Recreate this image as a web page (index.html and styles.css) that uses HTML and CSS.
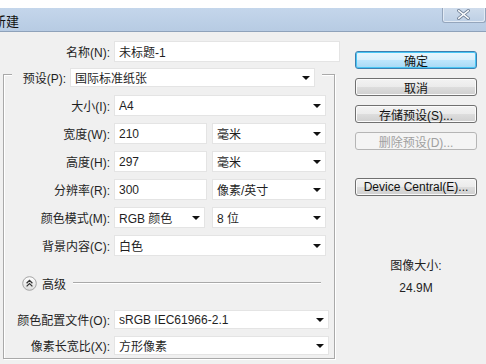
FILE: index.html
```html
<!DOCTYPE html>
<html lang="zh-CN">
<head>
    <meta charset="UTF-8">
    <title>新建</title>
    <link rel="stylesheet" href="styles.css">
</head>
<body>
    <div class="topgap"></div>
    <div class="titlebar">
        <span class="title">新建</span>
        <span class="close">
            <svg width="44" height="15" viewBox="0 0 44 15">
                <path d="M17 3.5 L27 11.5 M27 3.5 L17 11.5" stroke="#6f7f95" stroke-width="3.2" stroke-linecap="round"/>
                <path d="M17 3.5 L27 11.5 M27 3.5 L17 11.5" stroke="#fbfcfd" stroke-width="1.4" stroke-linecap="round"/>
            </svg>
        </span>
    </div>
    <div class="dialog">
        <!--左側表單-->
        <div class="main">
            <div class="row">
                <label class="lbl">名称(N):</label>
                <div class="field f-name">未标题-1</div>
            </div>
            <div class="group">
                <div class="legend">
                    <label class="lbl-legend">预设(P):</label>
                    <div class="field f-preset">国际标准纸张<i class="arrow"></i></div>
                </div>
                <div class="row first">
                    <label class="lbl">大小(I):</label>
                    <div class="field f-full">A4<i class="arrow"></i></div>
                </div>
                <div class="row">
                    <label class="lbl">宽度(W):</label>
                    <div class="field f-num">210</div>
                    <div class="field f-unit">毫米<i class="arrow"></i></div>
                </div>
                <div class="row">
                    <label class="lbl">高度(H):</label>
                    <div class="field f-num">297</div>
                    <div class="field f-unit">毫米<i class="arrow"></i></div>
                </div>
                <div class="row">
                    <label class="lbl">分辨率(R):</label>
                    <div class="field f-num">300</div>
                    <div class="field f-unit">像素/英寸<i class="arrow"></i></div>
                </div>
                <div class="row">
                    <label class="lbl">颜色模式(M):</label>
                    <div class="field f-mode">RGB 颜色<i class="arrow"></i></div>
                    <div class="field f-bits">8 位<i class="arrow"></i></div>
                </div>
                <div class="row">
                    <label class="lbl">背景内容(C):</label>
                    <div class="field f-full">白色<i class="arrow"></i></div>
                </div>
                <!--高級-->
                <div class="advanced">
                    <svg class="adv-icon" width="15" height="15" viewBox="0 0 15 15">
                        <defs>
                            <linearGradient id="g" x1="0" y1="0" x2="0" y2="1">
                                <stop offset="0" stop-color="#ffffff"/>
                                <stop offset="1" stop-color="#dcdcdc"/>
                            </linearGradient>
                        </defs>
                        <circle cx="7.5" cy="7.5" r="6.8" fill="url(#g)" stroke="#a3a3a3"/>
                        <path d="M4.6 7.2 L7.5 4.4 L10.4 7.2 M4.6 10.4 L7.5 7.6 L10.4 10.4" fill="none" stroke="#333" stroke-width="1.3"/>
                    </svg>
                    <span class="adv-text">高级</span>
                    <span class="adv-line"></span>
                </div>
                <div class="row small gap-big">
                    <label class="lbl">颜色配置文件(O):</label>
                    <div class="field f-long">sRGB IEC61966-2.1<i class="arrow"></i></div>
                </div>
                <div class="row small">
                    <label class="lbl">像素长宽比(X):</label>
                    <div class="field f-long">方形像素<i class="arrow"></i></div>
                </div>
            </div>
        </div>
        <!--右側按鈕-->
        <div class="side">
            <div class="btn btn-ok">确定</div>
            <div class="btn">取消</div>
            <div class="btn">存储预设(S)...</div>
            <div class="btn disabled">删除预设(D)...</div>
            <div class="btn btn-device">Device Central(E)...</div>
            <div class="info">图像大小:</div>
            <div class="info size">24.9M</div>
        </div>
    </div>
</body>
</html>
```

FILE: styles.css
```css
*{
    margin: 0;
    padding: 0;
    box-sizing: border-box;
}
body{
    width: 486px;
    height: 364px;
    overflow: hidden;
    background: #f0f0f0;
    font-family: "Liberation Sans", "Noto Sans CJK SC", sans-serif;
    font-size: 12px;
    color: #1f1f1f;
}
.topgap{
    height: 8px;
    background: #fff;
}
.titlebar{
    height: 24px;
    background: linear-gradient(#c4d6eb, #b7cbe3);
    border-bottom: 1px solid #8fa2ba;
    display: flex;
    justify-content: space-between;
    align-items: flex-start;
}
.title{
    margin-left: -7px;
    margin-top: 3px;
    font-size: 13px;
    color: #111;
}
.close{
    width: 44px;
    height: 15px;
    border: 1px solid #94a5bc;
    border-top: 0;
    border-radius: 0 0 3px 3px;
    background: linear-gradient(#cfdcec, #bdcfe5);
    box-shadow: inset 1px 0 #e2eaf4, inset -1px -1px #e2eaf4;
    display: flex;
}
.close svg{
    margin: -1px 0 0 -1px;
}
.dialog{
    display: flex;
    padding-top: 9px;
}
.main{
    width: 341px;
}
.row{
    display: flex;
    align-items: center;
    height: 21px;
}
.lbl{
    width: 114px;
    text-align: right;
    padding-right: 4px;
    white-space: nowrap;
}
.field{
    height: 21px;
    background: #fff;
    border: 1px solid #e4e4e4;
    padding-left: 4px;
    display: flex;
    align-items: center;
    white-space: nowrap;
}
.arrow{
    margin-left: auto;
    margin-right: 4px;
    border-left: 4px solid transparent;
    border-right: 4px solid transparent;
    border-top: 4px solid #111;
}
.f-name{
    width: 226px;
}
.group{
    margin: 12px 0 0 3px;
    width: 332px;
    height: 285px;
    border: 1px solid #a9a9a9;
    box-shadow: inset 1px 1px #fff, 1px 1px #fff;
}
.group .lbl{
    width: 110px;
}
.legend{
    display: flex;
    align-items: center;
    width: max-content;
    margin: -7px 0 0 8px;
    padding-right: 7px;
    background: #f0f0f0;
}
.lbl-legend{
    width: 58px;
    text-align: right;
    padding-right: 4px;
}
.f-preset{
    width: 245px;
    height: 19px;
}
.group .row{
    margin-top: 7px;
}
.group .row.first{
    margin-top: 8px;
}
.f-full{
    width: 212px;
}
.f-num{
    width: 93px;
}
.f-unit{
    width: 114px;
    margin-left: 5px;
}
.f-mode{
    width: 91px;
}
.f-bits{
    width: 114px;
    margin-left: 7px;
}
.advanced{
    display: flex;
    align-items: center;
    height: 16px;
    margin-top: 19px;
}
.adv-icon{
    margin-left: 18px;
}
.adv-text{
    margin-left: 5px;
}
.adv-line{
    flex: 1;
    margin: 0 13px 0 7px;
    height: 2px;
    border-top: 1px solid #a9a9a9;
    border-bottom: 1px solid #fff;
}
.group .row.small{
    height: 19px;
}
.group .row.gap-big{
    margin-top: 19px;
}
.row.small .field{
    height: 19px;
}
.f-long{
    width: 215px;
}
.side{
    margin-left: 14px;
    width: 122px;
}
.btn{
    height: 18px;
    margin-top: 9px;
    border: 1px solid #707070;
    border-radius: 3px;
    background: linear-gradient(#f3f3f3 0%, #ebebeb 50%, #dddddd 51%, #cfcfcf 100%);
    box-shadow: inset 0 0 0 1px #fbfbfb;
    display: flex;
    align-items: center;
    justify-content: center;
    color: #111;
}
.btn-ok{
    margin-top: 10px;
    border-color: #3c7fb1;
    background: linear-gradient(#eaf6fd 0%, #d9f0fc 50%, #bee6fd 51%, #a7d9f5 100%);
    box-shadow: inset 0 0 0 1px #48c6f4;
}
.disabled{
    border-color: #b5b5b5;
    background: #f4f4f4;
    box-shadow: none;
    color: #a0a0a0;
}
.btn-device{
    margin-top: 28px;
}
.info{
    text-align: center;
    line-height: 14px;
    margin-top: 63px;
    color: #222;
}
.info.size{
    margin-top: 8px;
}
```
